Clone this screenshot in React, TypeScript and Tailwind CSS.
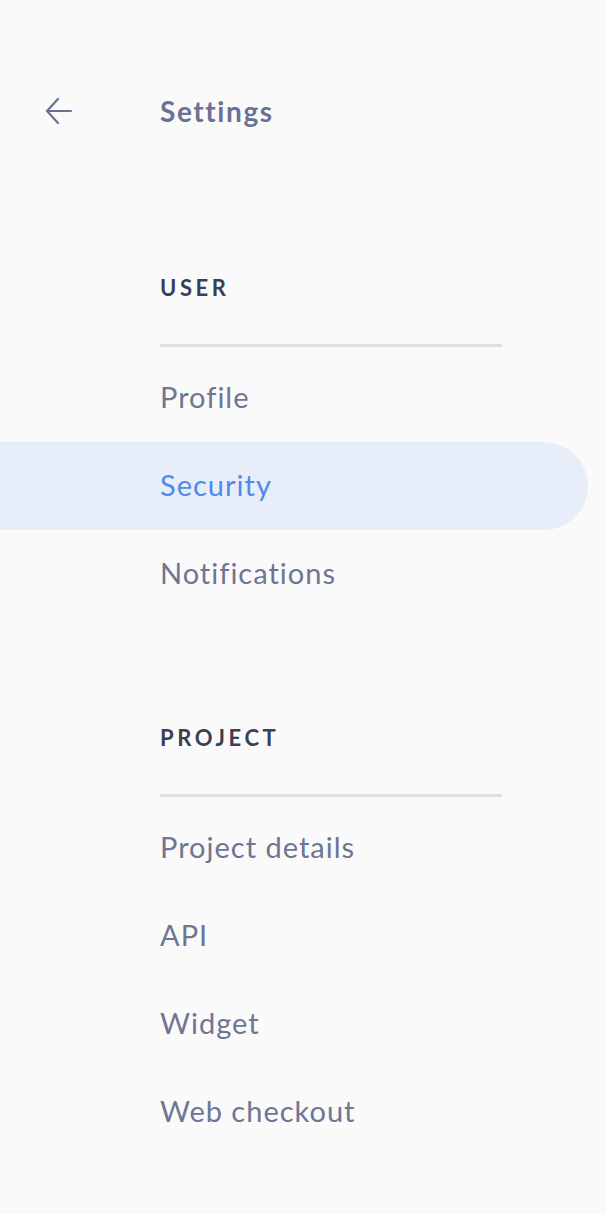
import { ReactNode } from "react";

const sections = [
  { title: "USER", items: ["Profile", "Security", "Notifications"] },
  { title: "PROJECT", items: ["Project details", "API", "Widget", "Web checkout"] },
];

const active = "Security";

function BackArrow() {
  return (
    <svg width="28" height="28" viewBox="0 0 28 28" fill="none" stroke="#6b7194" strokeWidth="2.2" strokeLinecap="round" strokeLinejoin="round">
      <path d="M26 14H2" />
      <path d="M13 2L2 14l11 12" />
    </svg>
  );
}

function NavItem({ label }: { label: string }) {
  const isActive = label === active;
  return (
    <div
      className={
        isActive
          ? "h-[88px] w-[588px] flex items-center pl-[160px] pb-[3px] rounded-r-full bg-[#e8eef9] text-[#4f8aed]"
          : "h-[88px] flex items-center pl-[160px] pb-[3px] text-[#6f7593]"
      }
    >
      <span className="text-[29px] leading-none tracking-[1px]">{label}</span>
    </div>
  );
}

function Section({ title, children }: { title: string; children: ReactNode }) {
  return (
    <div className="flex flex-col">
      <div className="pl-[160px] h-[28px] flex items-center pb-[1px] text-[22px] font-bold tracking-[3.6px] text-[#3b3f54]">
        {title}
      </div>
      <div className="ml-[160px] mt-[42px] mb-[7px] w-[342px] h-[3px] bg-[#dfe0e6]" />
      {children}
    </div>
  );
}

export default function App() {
  return (
    <div className="w-[606px] h-[1214px] bg-[#fafafa] overflow-hidden" style={{ fontFamily: "Lato, 'Open Sans', sans-serif" }}>
      <div className="h-[222px] flex items-center">
        <div className="flex items-center h-[28px]">
          <div className="ml-[45px] w-[28px] flex items-center"><BackArrow /></div>
          <span className="ml-[87px] text-[28px] font-bold text-[#6b7194] tracking-[1.6px]">Settings</span>
        </div>
      </div>
      <div className="pt-[52px]">
        <Section title={sections[0].title}>
          {sections[0].items.map((i) => (
            <NavItem key={i} label={i} />
          ))}
        </Section>
        <div className="h-[106px]" />
        <Section title={sections[1].title}>
          {sections[1].items.map((i) => (
            <NavItem key={i} label={i} />
          ))}
        </Section>
      </div>
    </div>
  );
}
